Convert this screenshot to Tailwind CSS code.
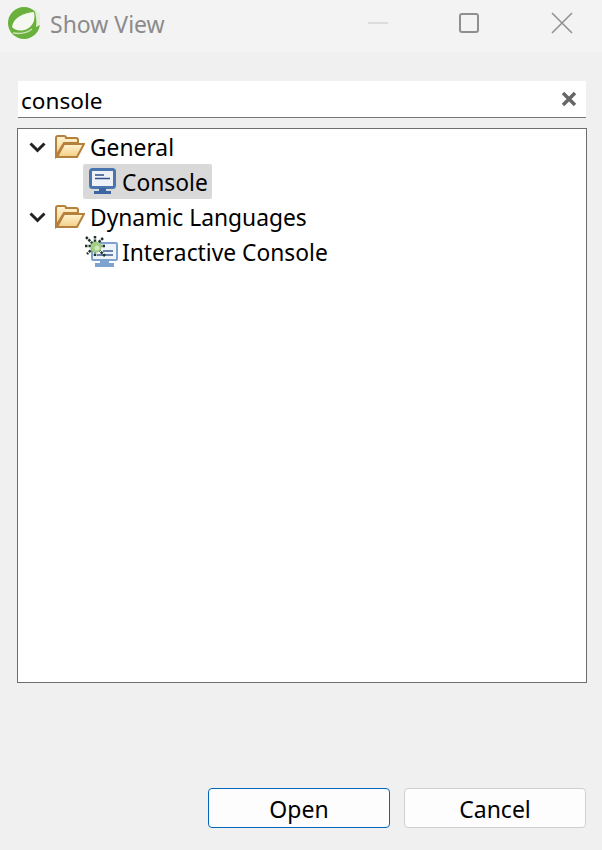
<!DOCTYPE html>
<html lang="en">
<head>
    <meta charset="UTF-8">
    <title>Show View</title>
    <script src="https://cdn.jsdelivr.net/npm/@tailwindcss/browser@4"></script>
</head>
<body class="bg-[#f0f0f0] font-['Noto_Sans',sans-serif] text-black w-[602px] h-[850px] overflow-hidden">

    <svg class="absolute w-0 h-0">
        <defs>
            <linearGradient id="folderFill" x1="0" y1="0" x2="0" y2="1">
                <stop offset="0" stop-color="#fff3d2"/>
                <stop offset="1" stop-color="#f3cf86"/>
            </linearGradient>
        </defs>
    </svg>

    <!-- title bar -->
    <div class="h-[52px] bg-[#f3f3f3] flex items-center pb-[6px]">
        <svg class="ml-[8px] w-[32px] h-[32px]" viewBox="0 0 32 32">
            <circle cx="16" cy="16" r="16" fill="#69b03c"/>
            <path d="M4 20 C5 11 15 6 26 5 C28 14 24 22 14 23.500 C10 24 6 22.500 4 20Z" fill="#f5f8f0"/>
            <path d="M26 1 L32 7 L32 18 L28 20 C29 14 28 8 26 1Z" fill="#e3efd6"/>
            <path d="M5 26 C11 27 19 26 24 22" stroke="#cfe3bb" stroke-width="1.500" fill="none"/>
        </svg>
        <span class="ml-[10px] mt-[2px] text-[23px] leading-none text-[#8b8b8b]">Show View</span>
        <div class="ml-auto flex items-center">
            <div class="w-[20px] h-[2px] bg-[#dcdcdc] mr-[71px]"></div>
            <div class="w-[20px] h-[20px] border-2 border-[#8f8f8f] rounded-[3px] mr-[72px]"></div>
            <svg class="w-[22px] h-[22px] mr-[29px]" viewBox="0 0 22 22"><path d="M1 1 L21 21 M21 1 L1 21" stroke="#8f8f8f" stroke-width="1.500" fill="none"/></svg>
        </div>
    </div>

    <!-- filter box -->
    <div class="mt-[29px] ml-[18px] w-[568px] h-[37px] bg-white border-b border-[#767676] flex items-center">
        <span class="ml-[3px] mt-[5px] text-[22.600px] leading-none">console</span>
        <svg class="ml-auto mr-[9px] w-[16px] h-[16px]" viewBox="0 0 16 16"><path d="M2 2 L14 14 M14 2 L2 14" stroke="#666666" stroke-width="3.500" fill="none"/></svg>
    </div>

    <!-- view tree -->
    <div class="mt-[10px] ml-[17px] w-[570px] h-[555px] bg-white border border-[#6e6e6e] text-[22.800px]">
        <div class="h-[35px] flex items-center">
            <svg class="ml-[11px] mt-[2px] w-[17px] h-[11px]" viewBox="0 0 17 11"><path d="M1.500 1.500 L8.500 8.500 L15.500 1.500" stroke="#222222" stroke-width="3" fill="none"/></svg>
            <svg class="ml-[9px] mt-[1px] w-[30px] h-[24px]" viewBox="0 0 30 24">
                <path d="M1 21 V3 Q1 1 3 1 H9 Q11 1 11 3 H21 Q23 3 23 5 V8 H9 L1 21Z" fill="url(#folderFill)" stroke="#b5803c" stroke-width="2"/>
                <path d="M2 22 L9 9 H29 L22 22Z" fill="url(#folderFill)" stroke="#b5803c" stroke-width="2"/>
            </svg>
            <span class="ml-[5px] mt-[4px] leading-none">General</span>
        </div>
        <div class="h-[35px] flex items-center">
            <div class="ml-[65px] w-[129px] h-[35px] bg-[#d9d9d9] rounded-[2px] flex items-center">
                <svg class="ml-[6px] w-[27px] h-[27px]" viewBox="0 0 27 27">
                    <rect x="1.500" y="1.500" width="24" height="18" rx="2" fill="#eef2f8" stroke="#4a75ae" stroke-width="3"/>
                    <path d="M6 7 H15 M6 10.500 H21" stroke="#2f4f87" stroke-width="1.500"/>
                    <path d="M10 20 H17 V23 H22 V26 H5 V23 H10Z" fill="#3c65a3"/>
                </svg>
                <span class="ml-[6px] mt-[4px] leading-none">Console</span>
            </div>
        </div>
        <div class="h-[35px] flex items-center">
            <svg class="ml-[11px] mt-[2px] w-[17px] h-[11px]" viewBox="0 0 17 11"><path d="M1.500 1.500 L8.500 8.500 L15.500 1.500" stroke="#222222" stroke-width="3" fill="none"/></svg>
            <svg class="ml-[9px] mt-[1px] w-[30px] h-[24px]" viewBox="0 0 30 24">
                <path d="M1 21 V3 Q1 1 3 1 H9 Q11 1 11 3 H21 Q23 3 23 5 V8 H9 L1 21Z" fill="url(#folderFill)" stroke="#b5803c" stroke-width="2"/>
                <path d="M2 22 L9 9 H29 L22 22Z" fill="url(#folderFill)" stroke="#b5803c" stroke-width="2"/>
            </svg>
            <span class="ml-[5px] mt-[4px] leading-none">Dynamic Languages</span>
        </div>
        <div class="h-[35px] flex items-center">
            <svg class="ml-[67px] w-[33px] h-[32px]" viewBox="0 0 33 32">
                <rect x="7" y="7" width="25" height="17" rx="1" fill="#eef3f9" stroke="#7fa3cf" stroke-width="2"/>
                <path d="M18 15 H28 M12 19 H28" stroke="#3d5f95" stroke-width="1.500"/>
                <path d="M15 24 H24 V27 H29 V31 H10 V27 H15Z" fill="#7fa3cf"/>
                <path d="M1 1 L20 20 M18 2 L2 18 M10 0 V21 M0 10 H21" stroke="#1f342a" stroke-width="2.500" stroke-dasharray="2.500 1"/>
                <circle cx="11" cy="11" r="5.500" fill="#9fce84"/>
                <circle cx="12" cy="12" r="2.500" fill="#cfe8bd"/>
            </svg>
            <span class="ml-[4px] mt-[4px] leading-none">Interactive Console</span>
        </div>
    </div>

    <!-- buttons -->
    <div class="mt-[105px] ml-[208px] flex gap-[14px] text-[23px]">
        <button class="w-[182px] h-[40px] pt-[2px] bg-[#fdfdfd] border border-[#0067c0] rounded-[4px] leading-none">Open</button>
        <button class="w-[182px] h-[40px] pt-[2px] bg-[#fdfdfd] border border-[#d0d0d0] rounded-[4px] leading-none">Cancel</button>
    </div>

</body>
</html>
